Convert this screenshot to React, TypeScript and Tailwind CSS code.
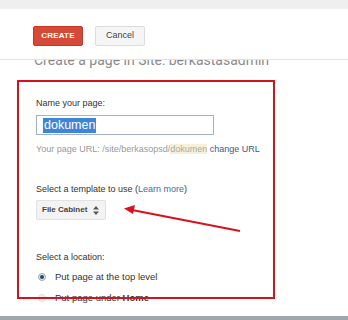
export default function App() {
  return (
    <div className="relative w-[348px] h-[320px] overflow-hidden bg-white flex flex-col font-['Liberation_Sans',Arial,sans-serif]">
      {/* top strip */}
      <div className="h-[9px] shrink-0 bg-[#efefef]" />

      {/* action bar */}
      <div className="relative z-10 h-[51px] shrink-0 bg-white border-b border-[#e2e2e2] flex items-start gap-[12px] pl-[33px] pt-[17px]">
        <button className="h-[20px] w-[50px] rounded-[2px] bg-[#d64937] border border-[#c53727] text-white text-[8px] font-bold tracking-[0.2px]">
          CREATE
        </button>
        <button className="h-[20px] w-[50px] rounded-[2px] bg-[#f5f5f5] border border-[#dcdcdc] text-[#444] text-[9px]">
          Cancel
        </button>
      </div>

      {/* page title, partly hidden under the bar */}
      <div className="-mt-[9px] pl-[34px] text-[14px] leading-[18px] text-[#8a8a8a] font-['Roboto',sans-serif] whitespace-nowrap">
        Create a page in Site: berkastasadmin
      </div>

      {/* form */}
      <div className="flex-1 flex flex-col pl-[36px] pt-[28px] text-[9px] leading-[12px] text-[#333]">
        <p>Name your page:</p>
        <div className="mt-[6px] w-[178px] h-[20px] border border-[#a3b2cc] flex items-center pl-[6px]">
          <span className="bg-[#3b86d8] text-white text-[12.5px] leading-[15px] px-[1px]">dokumen</span>
        </div>
        <p className="mt-[8px] text-[#999] whitespace-nowrap">
          Your page URL: /site/berkasopsd/<span className="bg-[#f6f1d6] text-[#aaa]">dokumen</span>{" "}
          <span className="text-[#3a5a8c]">change URL</span>
        </p>

        <p className="mt-[28px] whitespace-nowrap">
          Select a template to use (<span className="text-[#4a6aa0]">Learn more</span>)
        </p>
        <div className="mt-[5px] w-[70px] h-[20px] rounded-[2px] bg-[#f3f3f3] border border-[#e2e2e2] flex items-center gap-[6px] pl-[5px] text-[8px] font-bold text-[#444]">
          File Cabinet
          <svg width="6" height="9" viewBox="0 0 6 9" fill="#555">
            <path d="M3 0 L6 3.5 H0 Z" />
            <path d="M0 5.5 H6 L3 9 Z" />
          </svg>
        </div>

        <p className="mt-[31px]">Select a location:</p>
        <div className="mt-[8px] flex items-center gap-[9px]">
          <span className="w-[8px] h-[8px] rounded-full border border-[#9aa] bg-[#e5e9ee] flex items-center justify-center ml-[2px]">
            <span className="w-[4px] h-[4px] rounded-full bg-[#27436b]" />
          </span>
          <span className="text-[9.5px]">Put page at the top level</span>
        </div>
        <div className="mt-[9px] flex items-center gap-[9px]">
          <span className="w-[8px] h-[8px] rounded-full border border-[#ddd] bg-[#f2f2f2] ml-[2px]" />
          <span className="text-[9.5px]">
            Put page under <b>Home</b>
          </span>
        </div>
      </div>

      {/* bottom strip */}
      <div className="h-[4px] shrink-0 bg-[#a2a7ac]" />

      {/* annotation: red frame */}
      <div className="pointer-events-none absolute left-[17px] top-[80px] w-[258px] h-[219px] border-2 border-[#d8121c]" />

      {/* annotation: red arrow */}
      <svg className="pointer-events-none absolute left-0 top-0" width="348" height="320">
        <line x1="240" y1="231" x2="132" y2="210" stroke="#d8121c" strokeWidth="2" />
        <path d="M124 208.5 L135 205 L133 214 Z" fill="#d8121c" />
      </svg>
    </div>
  )
}
